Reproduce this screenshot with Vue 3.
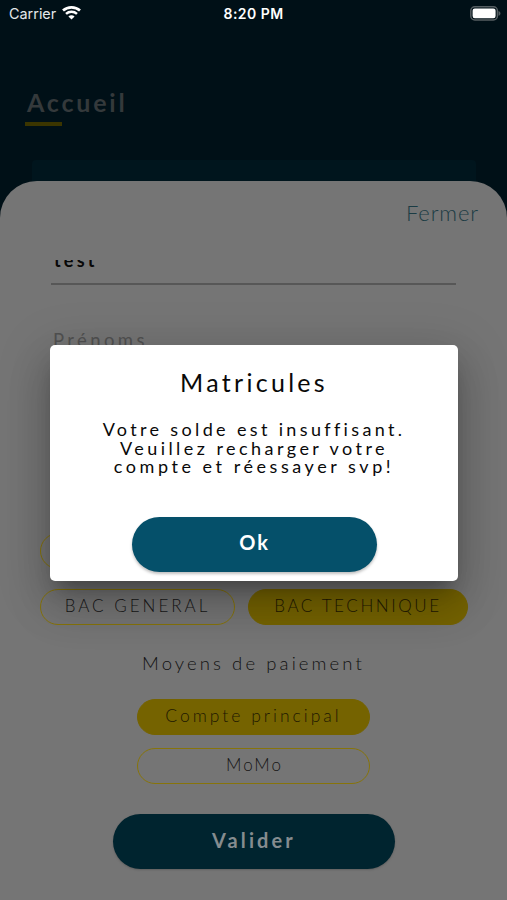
<script setup>
import { ref } from 'vue';

const nom = ref('test');
const showDialog = ref(true);
const serie = ref('BAC TECHNIQUE');
const paiement = ref('Compte principal');

const series = [
  { label: 'BAC GENERAL', css: 'general' },
  { label: 'BAC TECHNIQUE', css: 'technique' }
];
const paiements = [
  { label: 'Compte principal', css: 'compte' },
  { label: 'MoMo', css: 'momo' }
];
</script>

<template>
  <div class="screen">
    <header class="status">
      <div class="carrier">
        <span>Carrier</span>
        <svg width="19" height="14" viewBox="0 0 19 14">
          <path d="M1 4.6C5.7 .3 13.3 .3 18 4.6" fill="none" stroke="#fff" stroke-width="2.7" />
          <path d="M4 7.9C7.1 5.1 11.9 5.1 15 7.9" fill="none" stroke="#fff" stroke-width="2.5" />
          <path d="M6.4 10.5C8.2 8.8 10.8 8.8 12.6 10.5L9.5 13.6Z" fill="#fff" />
        </svg>
      </div>
      <span class="time">8:20 PM</span>
      <svg class="battery" width="31" height="15" viewBox="0 0 31 15">
        <rect x=".8" y=".8" width="26.6" height="13.2" rx="4" fill="none" stroke="#555e62" stroke-width="1.5" />
        <rect x="2.6" y="2.6" width="23" height="9.6" rx="2.2" fill="#fff" />
        <path d="M28.5 5C31.1 6 31.1 8.8 28.5 9.8Z" fill="#555e62" />
      </svg>
    </header>

    <div class="heading">
      <h1>Accueil</h1>
      <div class="underline"></div>
    </div>
    <div class="card"></div>

    <main class="sheet">
      <div class="close">Fermer</div>
      <div class="form">
        <div class="field">{{ nom }}</div>
        <div class="prenoms">Prénoms</div>
        <div class="row hidden-row">
          <div class="chip"></div>
        </div>
        <div class="row">
          <div
            v-for="s in series"
            :key="s.label"
            class="chip"
            :class="[s.css, { active: s.label === serie }]"
            @click="serie = s.label"
          >{{ s.label }}</div>
        </div>
        <h2>Moyens de paiement</h2>
        <div class="payments">
          <div
            v-for="p in paiements"
            :key="p.label"
            class="chip"
            :class="[p.css, { active: p.label === paiement }]"
            @click="paiement = p.label"
          >{{ p.label }}</div>
        </div>
        <button class="valider">Valider</button>
      </div>
    </main>

    <div v-if="showDialog" class="dialog">
      <h3>Matricules</h3>
      <p>
        <span class="l1">Votre solde est insuffisant.</span><br>
        <span class="l2">Veuillez recharger votre</span><br>
        <span class="l3">compte et réessayer svp!</span>
      </p>
      <button class="ok" @click="showDialog = false">Ok</button>
    </div>
  </div>
</template>

<style>
body {
  margin: 0;
}
</style>

<style scoped>
.screen {
  position: relative;
  display: flex;
  flex-direction: column;
  width: 507px;
  height: 900px;
  overflow: hidden;
  background: #001017;
  font-family: Lato, sans-serif;
}

h1, h2, h3, p {
  margin: 0;
  font-weight: 400;
}

button {
  border: none;
  padding: 0;
  font-family: inherit;
  cursor: pointer;
}

.status {
  display: grid;
  grid-template-columns: 1fr auto 1fr;
  align-items: center;
  height: 28px;
  padding: 0 6px 2px 9px;
  box-sizing: border-box;
  color: #fff;
  font-family: Inter, sans-serif;
  font-size: 14.4px;
}

.carrier {
  display: flex;
  align-items: center;
  gap: 6px;
  color: #e4e8ea;
}

.time {
  margin-right: 3px;
  font-weight: 600;
  font-size: 14px;
  letter-spacing: .45px;
}

.battery {
  justify-self: end;
}

.heading {
  height: 132px;
  padding: 59px 0 0 25px;
  box-sizing: border-box;
}

h1 {
  height: 35px;
  padding-left: 2px;
  line-height: 30px;
  font-size: 25px;
  font-weight: 700;
  color: #34393b;
  letter-spacing: 2.8px;
}

.underline {
  width: 37px;
  height: 4px;
  background: #3b3500;
}

.card {
  flex: none;
  width: 444px;
  height: 70px;
  margin: 0 0 -49px 32px;
  background: #00151d;
  border-radius: 4px;
}

.sheet {
  position: relative;
  flex: 1;
  background: #757575;
  border-radius: 37px 37px 0 0;
}

.close {
  height: 79px;
  padding: 17px 28px 0 0;
  box-sizing: border-box;
  text-align: right;
  font-size: 22px;
  line-height: 30px;
  color: #1b3c44;
  font-weight: 300;
  letter-spacing: .9px;
}

.form {
  display: flex;
  flex-direction: column;
  overflow: hidden;
  height: 640px;
}

.field {
  flex: none;
  height: 25px;
  margin: 0 51px;
  padding-left: 3px;
  box-sizing: border-box;
  border-bottom: 2px solid #575757;
  line-height: 0;
  text-indent: 0;
  font-size: 18px;
  font-weight: 700;
  color: #080808;
  letter-spacing: 3.2px;
}

.prenoms {
  flex: none;
  height: 248px;
  padding: 43px 0 0 53px;
  box-sizing: border-box;
  line-height: 24px;
  font-size: 18.5px;
  color: #515151;
  letter-spacing: 3.4px;
}

.row {
  display: grid;
  flex: none;
  grid-template-columns: 195px 220px;
  gap: 13px;
  margin-left: 40px;
}

.hidden-row {
  margin-bottom: 20px;
}

.chip {
  height: 36px;
  box-sizing: border-box;
  border: 1.5px solid #87740a;
  border-radius: 18px;
  text-align: center;
  line-height: 32px;
  font-size: 17px;
  font-weight: 300;
  color: #151515;
  letter-spacing: 2px;
}

.chip.active {
  background: #756300;
  border-color: #756300;
  color: #1d1800;
}

.general {
  letter-spacing: 3px;
}

.technique {
  letter-spacing: 2.6px;
}

.compte {
  font-size: 17.5px;
  letter-spacing: 3px;
}

.momo {
  padding-left: 2px;
}

h2 {
  height: 74px;
  padding-top: 23px;
  box-sizing: border-box;
  text-align: center;
  line-height: 30px;
  font-size: 18.5px;
  font-weight: 300;
  color: #111;
  letter-spacing: 3.1px;
}

.payments {
  display: grid;
  flex: none;
  width: 233px;
  gap: 13px;
  margin: 0 auto 30px 137px;
}

.valider {
  flex: none;
  width: 282px;
  height: 55px;
  margin-left: 113px;
  padding-bottom: 4px;
  border-radius: 28px;
  background: #00242f;
  box-shadow: 0 1px 2px #5f5f5f;
  color: #858c8f;
  font-size: 20px;
  font-weight: 700;
  letter-spacing: 3.1px;
}

.dialog {
  position: absolute;
  left: 50px;
  top: 345px;
  width: 408px;
  height: 236px;
  background: #fff;
  border-radius: 5px;
  box-shadow: 0 13px 18px -8px rgba(0, 0, 0, .3), 0 26px 44px 3px rgba(0, 0, 0, .14), 0 10px 50px 8px rgba(0, 0, 0, .13);
  text-align: center;
  color: #090909;
}

h3 {
  padding-top: 22px;
  line-height: 30px;
  font-size: 25px;
  letter-spacing: 3.3px;
}

p {
  padding-top: 23px;
  line-height: 18.5px;
  font-size: 18px;
}

.l1 {
  letter-spacing: 3.35px;
}

.l2 {
  letter-spacing: 3.45px;
}

.l3 {
  letter-spacing: 3.55px;
}

.ok {
  display: block;
  width: 245px;
  height: 55px;
  margin: 41px auto 0 82px;
  padding-bottom: 5px;
  border-radius: 28px;
  background: #05506a;
  box-shadow: 0 2px 3px rgba(0, 0, 0, .25);
  color: #fff;
  font-size: 20px;
  font-weight: 700;
  letter-spacing: 1.8px;
}
</style>
